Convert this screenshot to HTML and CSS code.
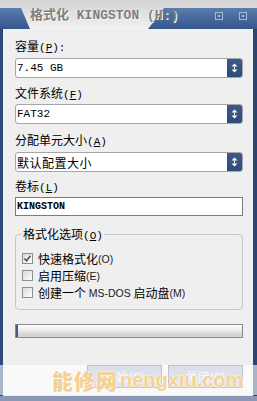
FILE: index.html
```html
<!DOCTYPE html>
<html>
<head>
<meta charset="utf-8">
<link rel="stylesheet" href="styles.css">
</head>
<body>
<div class="window">
  <div class="titlebar">
    <div class="title">格式化 KINGSTON (H:)</div>
    <div class="tbtns">
      <svg width="8" height="8" viewBox="0 0 8 8"><rect x="0.5" y="0.5" width="7" height="7" fill="none" stroke="#aab8d0"/><rect x="3" y="3" width="2" height="2" fill="#aab8d0"/></svg>
      <svg width="8" height="8" viewBox="0 0 8 8"><rect x="0.5" y="0.5" width="7" height="7" fill="none" stroke="#aab8d0"/><rect x="3" y="3" width="2" height="2" fill="#aab8d0"/></svg>
    </div>
  </div>
  <div class="panel">
    <div class="lbl l1">容量<span class="k">(<u>P</u>):</span></div>
    <div class="select s1"><span class="val mono">7.45 GB</span><span class="spin"><svg width="7" height="10" viewBox="0 0 7 10"><path d="M3.5 0.5 L6.5 3.5 H0.5Z" fill="#fff"/><rect x="3" y="3.5" width="1" height="3" fill="#fff"/><path d="M3.5 9.5 L6.5 6.5 H0.5Z" fill="#fff"/></svg></span></div>
    <div class="lbl l2">文件系统<span class="k">(<u>F</u>)</span></div>
    <div class="select s2"><span class="val mono">FAT32</span><span class="spin"><svg width="7" height="10" viewBox="0 0 7 10"><path d="M3.5 0.5 L6.5 3.5 H0.5Z" fill="#fff"/><rect x="3" y="3.5" width="1" height="3" fill="#fff"/><path d="M3.5 9.5 L6.5 6.5 H0.5Z" fill="#fff"/></svg></span></div>
    <div class="lbl l3">分配单元大小<span class="k">(<u>A</u>)</span></div>
    <div class="select s3"><span class="val cn">默认配置大小</span><span class="spin"><svg width="7" height="10" viewBox="0 0 7 10"><path d="M3.5 0.5 L6.5 3.5 H0.5Z" fill="#fff"/><rect x="3" y="3.5" width="1" height="3" fill="#fff"/><path d="M3.5 9.5 L6.5 6.5 H0.5Z" fill="#fff"/></svg></span></div>
    <div class="lbl l4">卷标<span class="k">(<u>L</u>)</span></div>
    <div class="input"><span class="val mono bold">KINGSTON</span></div>
    <fieldset class="group">
      <legend>格式化选项<span class="k">(<u>O</u>)</span></legend>
      <div class="chk"><span class="box"><svg width="11" height="11" viewBox="0 0 11 11"><defs><linearGradient id="g1" x1="0" y1="0" x2="1" y2="1"><stop offset="0" stop-color="#d8d8d8"/><stop offset="1" stop-color="#ffffff"/></linearGradient></defs><rect x="0.5" y="0.5" width="10" height="10" fill="url(#g1)" stroke="#8e8e8e"/><path d="M2.5 5.5 L4.5 7.8 L8.5 2.8" fill="none" stroke="#4a4f6a" stroke-width="1.5"/></svg></span>快速格式化<span class="s">(O)</span></div>
      <div class="chk"><span class="box"><svg width="11" height="11" viewBox="0 0 11 11"><defs><linearGradient id="g2" x1="0" y1="0" x2="1" y2="1"><stop offset="0" stop-color="#d8d8d8"/><stop offset="1" stop-color="#ffffff"/></linearGradient></defs><rect x="0.5" y="0.5" width="10" height="10" fill="url(#g2)" stroke="#8e8e8e"/></svg></span>启用压缩<span class="s">(E)</span></div>
      <div class="chk"><span class="box"><svg width="11" height="11" viewBox="0 0 11 11"><defs><linearGradient id="g3" x1="0" y1="0" x2="1" y2="1"><stop offset="0" stop-color="#d8d8d8"/><stop offset="1" stop-color="#ffffff"/></linearGradient></defs><rect x="0.5" y="0.5" width="10" height="10" fill="url(#g3)" stroke="#8e8e8e"/></svg></span>创建一个 <span class="s">MS-DOS</span> 启动盘<span class="s">(M)</span></div>
    </fieldset>
    <div class="progress"><div class="fill"></div></div>
    <div class="buttons">
      <div class="btn">开始(S)</div>
      <div class="btn">关闭(C)</div>
    </div>
  </div>
  <div class="bottom"></div>
  <div class="watermark"><span class="wcn">能修网</span><span class="wen">nengxiu.com</span></div>
</div>
</body>
</html>
```
FILE: styles.css
```css
html, body {
  margin: 0;
  padding: 0;
}
body {
  width: 257px;
  height: 401px;
  overflow: hidden;
  background: #efefef;
  font-family: "Noto Sans CJK SC", sans-serif;
}
.window {
  position: relative;
  width: 257px;
  height: 401px;
  display: flex;
  flex-direction: column;
}
.titlebar {
  position: relative;
  flex: none;
  height: 29px;
  box-sizing: border-box;
  padding: 9px 0 0 30px;
  display: flex;
  align-items: flex-start;
  background: linear-gradient(#7291bf, #5172a5 45%, #36578c);
}
.titlebar::before {
  content: "";
  position: absolute;
  inset: 0;
  background: linear-gradient(#d4d4d4, #e4e4e4 60%, #f2f2f2);
  clip-path: polygon(0 0, 100% 0, 100% 8px, 164px 8px, 148px 100%, 30px 100%, 21px 8px, 0 8px);
}
.title {
  position: relative;
  font: bold 13px/14px "Liberation Mono", "Noto Sans CJK SC", monospace;
  color: #7f7f7f;
  text-shadow: 1px 1px 0 #f6f6f6;
  white-space: nowrap;
}
.tbtns {
  position: relative;
  margin-left: auto;
  display: flex;
  gap: 16px;
  padding: 3px 10px 0 0;
}
.tbtns svg { display: block; }
.panel {
  flex: 1;
  min-height: 0;
  background: #efefef;
  border-left: 3px solid #2c4a7e;
  border-right: 4px solid #2b4472;
  padding: 10px 10px 0 12px;
  display: flex;
  flex-direction: column;
}
.lbl {
  font-size: 12px;
  line-height: 14px;
  height: 14px;
  color: #000;
  white-space: nowrap;
}
.k {
  font: 11px "Liberation Mono", monospace;
}
.l2 { margin-top: 8px; }
.l3 { margin-top: 9px; }
.l4 { margin-top: 7px; }
.select {
  height: 20px;
  box-sizing: border-box;
  border: 1px solid #a6a6a6;
  border-radius: 3px;
  background: #fff;
  display: flex;
  align-items: center;
}
.s1 { margin-top: 5px; }
.s2 { margin-top: 4px; }
.s3 { margin-top: 5px; }
.val {
  flex: 1;
  padding-left: 1px;
  color: #000;
  white-space: nowrap;
}
.mono {
  font: 11px "Liberation Mono", monospace;
}
.bold {
  font-weight: bold;
  font-size: 10px;
}
.cn {
  font-size: 12px;
  letter-spacing: 0.5px;
}
.spin {
  width: 15px;
  align-self: stretch;
  background: linear-gradient(#3c5a8a, #2e4a78);
  border-radius: 0 2px 2px 0;
  display: flex;
  align-items: center;
  justify-content: center;
}
.spin svg { display: block; }
.input {
  margin-top: 4px;
  height: 19px;
  box-sizing: border-box;
  border: 1px solid #7c7c7c;
  background: #fff;
  display: flex;
  align-items: center;
}
.group {
  margin: 11px 0 0 0;
  padding: 8px 6px 8px 6px;
  border: 1px solid #c6c6c6;
  border-radius: 4px;
  min-width: 0;
}
.group legend {
  padding: 0 1px;
  font-size: 12px;
  line-height: 14px;
  color: #000;
}
.chk {
  display: flex;
  align-items: center;
  height: 17px;
  font-size: 12px;
  color: #000;
  white-space: pre;
}
.box {
  width: 11px;
  height: 11px;
  margin-right: 5px;
}
.box svg { display: block; }
.s {
  font: 10.5px "Liberation Sans", sans-serif;
  color: #222;
}
.progress {
  margin-top: 14px;
  height: 14px;
  box-sizing: border-box;
  border: 1px solid #8a8a8a;
  background: linear-gradient(#fdfdfd, #eeeeee 40%, #cfcfcf 85%, #dadada);
  display: flex;
}
.fill {
  width: 2px;
  background: #4a5a7e;
}
.buttons {
  margin-top: 27px;
  display: flex;
  justify-content: flex-end;
  gap: 6px;
}
.btn {
  width: 75px;
  height: 23px;
  box-sizing: border-box;
  border: 1px solid #56648f;
  background: linear-gradient(#a8b0cc, #b6bdd6);
  color: #f4f5fa;
  font-size: 12px;
  display: flex;
  align-items: center;
  justify-content: center;
}
.bottom {
  flex: none;
  height: 5px;
  background: #8b97b4;
}
.watermark {
  position: absolute;
  left: 0;
  right: 0;
  top: 365px;
  height: 30px;
  background: rgba(255, 255, 255, 0.6);
  display: flex;
  align-items: center;
  padding-left: 52px;
  gap: 2px;
  white-space: nowrap;
}
.wcn {
  font: 900 21px/24px "Noto Sans CJK SC", sans-serif;
  letter-spacing: 1px;
  color: #f5d093;
  text-shadow: 0 0 2px #fff, 0 0 1px #fff;
}
.wen {
  font: bold 20px/24px "Liberation Sans", sans-serif;
  color: #f4d48f;
  text-shadow: 0 0 2px #fff, 0 0 1px #fff;
}
```
